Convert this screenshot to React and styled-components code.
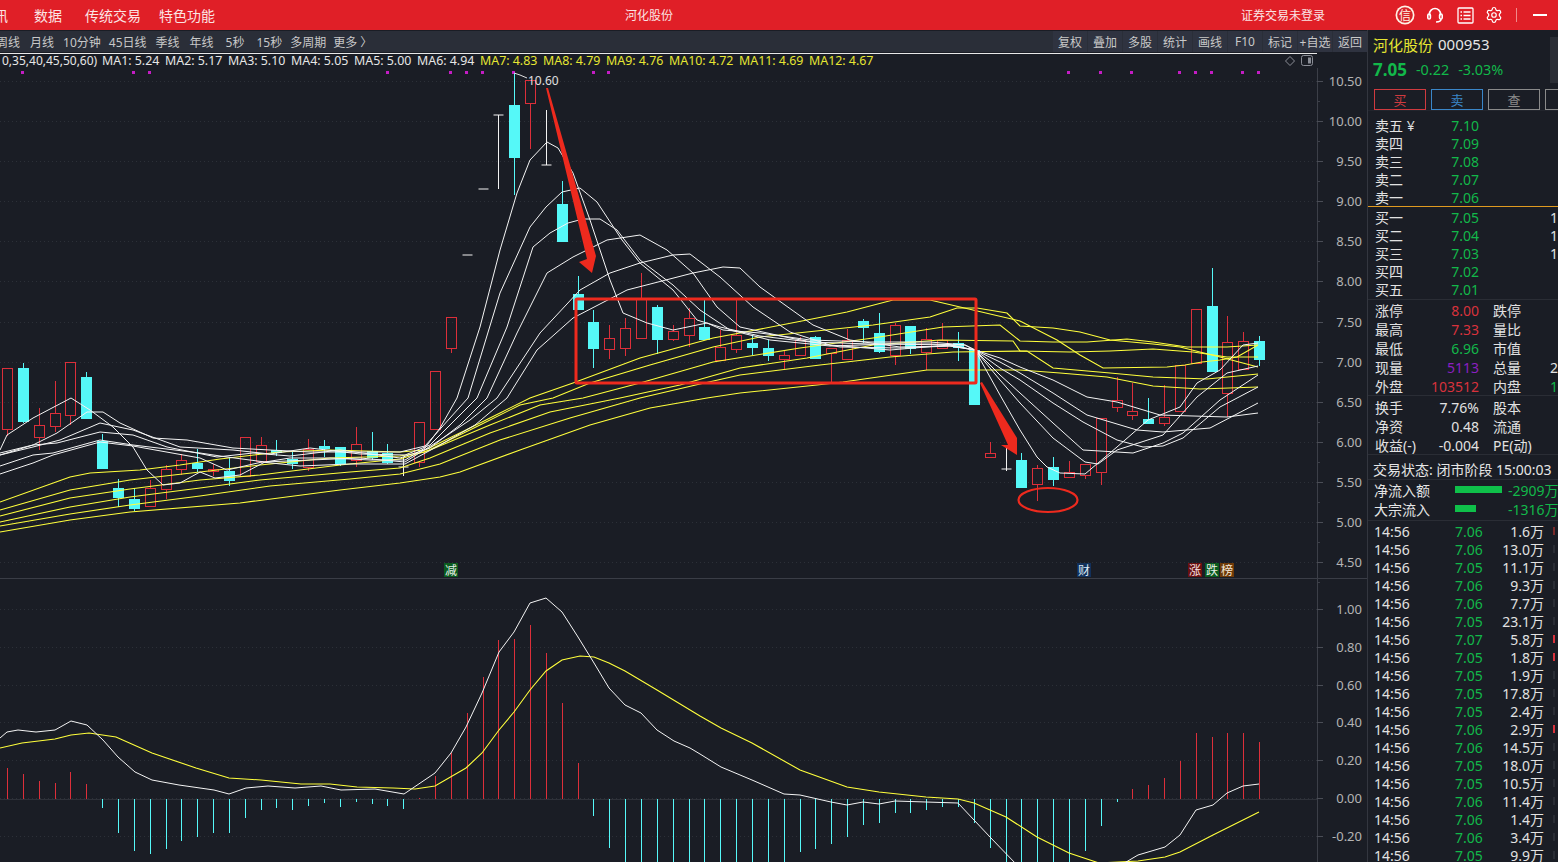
import React from 'react';
import styled, { createGlobalStyle } from 'styled-components';
import { Settings } from 'lucide-react';

const FONT = '"Noto Sans", "Noto Sans CJK SC", sans-serif';
const CYAN = '#55f8f8';
const RED = '#dc2f3a';
const LINE_RED = '#ee2a1e';
const YELLOW = '#ffff3c';

const GlobalStyle = createGlobalStyle`
  html, body { margin: 0; padding: 0; background: #1a1d25; overflow: hidden; }
  * { box-sizing: border-box; }
`;

const Page = styled.div`
  width: 1558px;
  height: 862px;
  overflow: hidden;
  display: flex;
  flex-direction: column;
  font-family: ${FONT};
  color: #e6e6e6;
  background: #1a1d25;
`;

/* top red bar */
const TopBar = styled.div`
  height: 30px;
  flex: none;
  background: #e01f27;
  display: flex;
  align-items: center;
  color: #fbe4e4;
  white-space: nowrap;
`;
const NavItem = styled.span`
  font-size: 14px;
  margin-left: ${p => p.$ml}px;
`;
const BarText = styled.span`
  font-size: 12px;
  margin-left: ${p => p.$ml}px;
`;
const BarIcon = styled.span`
  display: flex;
  width: 20px;
  height: 20px;
  align-items: center;
  justify-content: center;
  margin-left: ${p => p.$ml}px;
`;
const BarDivider = styled.span`
  width: 1px;
  height: 14px;
  background: #f08a8a;
  margin-left: 12px;
`;

const Body = styled.div`
  flex: 1;
  display: flex;
  min-height: 0;
`;
const ChartColumn = styled.div`
  width: 1367px;
  flex: none;
  display: flex;
  flex-direction: column;
`;

/* period toolbar */
const ToolBar = styled.div`
  height: 21px;
  margin-top: 1px;
  flex: none;
  background: #2a2e38;
  display: flex;
  align-items: center;
  justify-content: space-between;
`;
const Periods = styled.div`
  display: flex;
  align-items: center;
  font-size: 12px;
  color: #c8c8c8;
  white-space: nowrap;
`;
const Period = styled.span`
  margin-left: ${p => p.$ml}px;
`;
const Tools = styled.div`
  display: flex;
  height: 100%;
  gap: 1px;
`;
const Tool = styled.span`
  width: 34px;
  display: flex;
  align-items: center;
  justify-content: center;
  font-size: 12px;
  color: #c8c8c8;
  white-space: nowrap;
  background: #2f3340;
`;

const Legend = styled.div`
  width: 1317px;
  height: 15px;
  flex: none;
  margin-top: 1px;
  border-top: 1px solid #e8e8e8;
  display: flex;
  align-items: center;
  gap: 5px;
  padding: 0 4px 1px 2px;
  font-size: 12.4px;
  white-space: nowrap;
`;
const LegendItem = styled.span`
  color: ${p => (p.$hot ? '#e6e632' : '#e6e6e6')};
  width: ${p => p.$w}px;
  flex: none;
`;
const LegendParams = styled(LegendItem)`
  font-size: 12px;
`;
const LegendTools = styled.span`
  margin-left: auto;
  display: flex;
  align-items: center;
  gap: 6px;
`;

const ChartSvg = styled.svg`
  display: block;
  width: 1367px;
  height: 794px;
  flex: none;
`;

/* right side panel */
const Side = styled.div`
  flex: 1;
  min-width: 0;
  overflow: hidden;
  border-left: 1px solid #33363f;
  font-size: 14px;
  white-space: nowrap;
`;
const HeadRow = styled.div`
  height: 28px;
  padding-left: 5px;
  display: flex;
  align-items: center;
  gap: 5px;
  font-size: 15px;
  position: relative;
`;
const StockName = styled.span`
  color: #e6e632;
`;
const Thumb = styled.span`
  position: absolute;
  right: 0;
  top: 7px;
  width: 8px;
  height: 46px;
  background: #2a2d35;
`;
const PriceRow = styled.div`
  height: 22px;
  padding-left: 5px;
  display: flex;
  align-items: center;
  color: #12b84a;
  font-size: 14.4px;
`;
const BigPrice = styled.b`
  font-size: 17px;
  margin-right: 9px;
`;
const Change = styled.span`
  margin-right: 9px;
`;
const TradeRow = styled.div`
  display: flex;
  gap: 5px;
  padding: 9px 0 1px 6px;
  height: 31px;
  border-bottom: 1px solid #22252d;
`;
const TradeBtn = styled.span`
  width: 52px;
  flex: none;
  height: 21px;
  border: 1px solid ${p => p.$c};
  color: ${p => p.$c};
  display: flex;
  align-items: center;
  justify-content: center;
  font-size: 13px;
`;
const Section = styled.div`
  padding-top: ${p => p.$pt || 0}px;
  padding-bottom: ${p => p.$pb || 0}px;
  border-bottom: ${p => (p.$line ? `1px solid ${p.$line}` : 'none')};
`;
const Row = styled.div`
  height: ${p => p.$h}px;
  padding-left: 7px;
  display: grid;
  grid-template-columns: 36px 68px 14px 57px 40px;
  align-items: center;
  color: #e2e2e2;
  overflow: hidden;
`;
const Value = styled.span`
  text-align: right;
  color: ${p => p.$c || '#e2e2e2'};
`;
const Label2 = styled.span`
  grid-column: 4;
`;
const Clipped = styled.span`
  grid-column: 5;
  color: ${p => p.$c || '#e2e2e2'};
`;
const StatusRow = styled.div`
  height: 21px;
  padding-left: 5px;
  display: flex;
  align-items: center;
  font-size: 14px;
  gap: 4px;
`;
const FlowRow = styled.div`
  height: 19px;
  padding-left: 6px;
  display: flex;
  align-items: center;
  font-size: 14px;
`;
const FlowName = styled.span`
  width: 81px;
  flex: none;
`;
const FlowTrack = styled.span`
  width: 53px;
  flex: none;
`;
const FlowBar = styled.span`
  display: block;
  height: 7px;
  background: #0fc04a;
`;
const FlowValue = styled.span`
  color: #12b84a;
`;
const TickRow = styled.div`
  height: 18px;
  padding-left: 6px;
  display: grid;
  grid-template-columns: 81px 28px 61px 9px 4px;
  align-items: center;
  color: #e2e2e2;
`;
const TickPrice = styled.span`
  color: #12b84a;
`;
const TickVol = styled.span`
  text-align: right;
`;
const TickMark = styled.span`
  grid-column: 5;
  width: 2px;
  height: 8px;
  background: ${p => p.$c};
`;

/* candles: [high, bodyTop, bodyBottom, low, kind] in page pixels; r hollow red, c filled cyan, w white doji */
const candles = [
  [368,368,429,436,'r'],[363,368,421,423,'c'],[408,425,437,450,'r'],[381,413,426,432,'r'],[362,362,415,425,'r'],[372,377,418,418,'c'],
  [434,441,468,468,'c'],[479,488,497,507,'c'],[488,499,508,511,'c'],[480,488,506,506,'r'],[465,469,489,499,'r'],[454,460,469,475,'r'],
  [449,463,468,472,'c'],[464,469,471,476,'r'],[457,471,480,486,'c'],[437,437,476,476,'r'],[437,445,461,463,'r'],[440,450,452,456,'c'],
  [452,459,463,469,'c'],[439,449,467,471,'r'],[440,446,448,457,'c'],[447,447,463,466,'c'],[427,444,460,467,'r'],[432,451,457,460,'c'],
  [444,453,462,464,'c'],[457,467,467,476,'w'],[422,422,462,467,'r'],[371,371,429,429,'r'],[317,317,348,353,'r'],[255,255,255,255,'w'],
  [189,189,189,189,'w'],[115,115,115,189,'w'],[73,105,157,195,'c'],[80,80,103,149,'r'],[110,165,165,165,'w'],[181,204,241,241,'c'],
  [276,294,309,309,'c'],[310,322,348,368,'c'],[325,338,349,359,'r'],[318,328,348,356,'r'],[273,298,338,338,'r'],[305,307,339,354,'c'],
  [325,331,339,341,'r'],[308,318,335,347,'r'],[300,327,339,339,'c'],[330,347,360,360,'r'],[300,335,349,353,'r'],[335,343,347,355,'c'],
  [340,348,355,361,'c'],[350,355,359,369,'r'],[337,340,355,355,'r'],[336,337,358,359,'c'],[348,348,353,382,'r'],[329,340,359,360,'r'],
  [319,321,327,343,'c'],[313,333,351,353,'c'],[323,325,355,365,'r'],[326,326,348,354,'c'],[328,339,352,370,'r'],[323,340,348,348,'r'],
  [332,343,347,361,'c'],[350,350,404,404,'c'],[442,453,457,457,'r'],[448,469,469,471,'w'],[453,460,487,488,'c'],[465,468,484,501,'r'],
  [457,467,479,486,'c'],[461,472,477,477,'r'],[464,464,475,479,'r'],[418,418,472,485,'r'],[377,400,407,412,'r'],[383,411,415,420,'r'],
  [398,419,423,423,'c'],[385,417,423,426,'r'],[365,365,411,411,'r'],[309,309,363,363,'r'],[268,306,371,371,'c'],[316,342,393,417,'r'],
  [332,341,369,369,'r'],[336,341,359,366,'c'],
];
const candleX = i => Math.round(7 + 15.85 * i) + 0.5;

const whiteLines = [
  [[0,450],[7,435],[33,418],[71,398],[90,410],[113,427],[133,447],[147,470],[163,485],[180,483],[200,472],[215,478],[240,475],[265,462],[290,458],[330,458],[370,460],[405,460],[425,448],[440,428],[457,398],[480,327],[500,250],[517,193],[530,160],[547,142],[558,148],[573,173],[590,220],[610,280],[623,313],[647,323],[673,330],[707,323],[723,330],[760,333],[810,340],[870,342],[930,342],[965,345],[975,350],[1000,395],[1020,430],[1037,457],[1047,467],[1060,473],[1085,474],[1117,447],[1148,420],[1180,407],[1197,383],[1220,370],[1243,345],[1258,343]],
  [[0,453],[33,445],[57,433],[87,412],[103,412],[120,423],[153,438],[187,440],[233,448],[270,450],[310,452],[350,452],[400,452],[425,446],[450,418],[468,398],[500,293],[530,227],[546,207],[562,192],[580,188],[597,202],[622,240],[640,263],[673,290],[697,320],[720,327],[760,336],[810,342],[870,344],[930,344],[965,345],[975,350],[1000,380],[1020,403],[1053,438],[1085,462],[1098,464],[1117,450],[1163,435],[1197,397],[1227,373],[1258,366]],
  [[0,455],[33,447],[60,440],[100,423],[133,430],[180,447],[233,450],[270,454],[310,448],[360,454],[405,455],[430,445],[455,420],[477,398],[507,327],[533,247],[550,233],[568,223],[583,219],[600,219],[617,230],[640,260],[673,285],[700,310],[730,330],[770,340],[830,346],[890,344],[950,345],[975,350],[1000,375],[1020,393],[1053,423],[1083,450],[1117,452],[1133,453],[1163,443],[1183,433],[1220,400],[1258,375]],
  [[0,455],[33,445],[57,443],[100,432],[133,435],[167,447],[217,457],[253,453],[290,456],[340,450],[400,458],[430,448],[460,425],[487,398],[517,333],[547,273],[573,257],[607,240],[640,235],[667,250],[693,273],[717,307],[740,327],[790,338],[840,347],[900,348],[950,346],[975,350],[1000,368],[1020,380],[1053,403],[1083,422],[1117,440],[1143,447],[1163,446],[1183,438],[1220,407],[1258,387]],
  [[0,466],[33,455],[53,453],[100,440],[133,445],[200,453],[227,457],[265,462],[310,460],[360,458],[405,462],[440,440],[470,420],[497,398],[540,333],[580,290],[610,273],[640,263],[673,255],[690,254],[720,277],[753,307],[790,332],[830,345],[890,350],[950,345],[975,350],[1000,362],[1020,373],[1053,393],[1087,415],[1137,430],[1163,432],[1210,428],[1258,403]],
  [[0,474],[33,463],[53,455],[100,442],[133,446],[200,458],[227,470],[262,462],[300,466],[350,464],[405,464],[440,445],[475,425],[507,398],[537,350],[573,318],[627,290],[693,273],[723,267],[740,268],[760,287],[785,305],[813,325],[850,340],[900,347],[950,346],[975,350],[1000,358],[1020,367],[1053,380],[1087,397],[1117,402],[1160,415],[1227,417],[1258,413]],
];
const yellowLines = [
  [[0,502],[70,477],[90,473],[140,470],[180,465],[220,459],[280,452],[330,450],[400,452],[425,450],[470,428],[500,413],[530,398],[573,383],[640,358],[713,338],[740,333],[807,320],[847,312],[893,300],[930,300],[973,310],[1020,321],[1057,340],[1080,355],[1103,368],[1167,367],[1185,365],[1202,362],[1220,360],[1237,357],[1258,345]],
  [[0,510],[70,490],[130,480],[200,472],[260,465],[330,458],[400,456],[425,452],[480,425],[520,405],[553,398],[590,383],[650,365],[713,347],[760,337],[873,325],[930,317],[957,308],[977,308],[1007,313],[1020,326],[1053,328],[1080,332],[1110,340],[1153,344],[1180,347],[1220,357],[1258,367]],
  [[0,516],[70,498],[130,489],[200,480],[260,475],[340,465],[400,459],[430,450],[490,425],[540,405],[583,398],[640,383],[713,362],[800,348],[873,338],[943,327],[1000,325],[1020,341],[1053,342],[1087,342],[1127,339],[1153,342],[1187,347],[1227,347],[1258,345]],
  [[0,522],[70,507],[130,497],[200,488],[260,480],[350,472],[400,468],[430,458],[490,433],[550,412],[620,398],[680,385],[740,368],[807,358],[873,345],[940,340],[1013,341],[1020,351],[1070,352],[1110,351],[1153,349],[1193,352],[1227,357],[1258,357]],
  [[0,526],[70,514],[130,505],[200,496],[270,486],[350,479],[400,474],[440,464],[500,440],[570,418],[640,398],[700,384],[740,375],[820,365],[890,357],[953,352],[1027,351],[1053,368],[1110,373],[1153,377],[1207,379],[1258,374]],
  [[0,532],[70,520],[130,512],[240,503],[340,490],[400,483],[440,477],[460,472],[520,450],[590,425],[650,408],[707,398],[740,393],[817,385],[843,382],[927,370],[1007,370],[1020,370],[1060,373],[1107,377],[1153,386],[1200,389],[1258,387]],
];

const macdDif = [[0,738],[7,732],[18,730],[36,732],[55,730],[71,721],[87,725],[103,740],[118,757],[135,772],[152,780],[179,785],[214,790],[229,794],[246,788],[268,786],[295,788],[321,786],[341,790],[375,789],[404,794],[435,773],[451,753],[466,727],[482,693],[499,652],[514,632],[530,603],[546,598],[562,612],[578,637],[594,663],[609,688],[625,705],[641,713],[657,730],[674,741],[690,748],[700,754],[721,767],[752,780],[784,794],[800,795],[831,802],[847,805],[863,802],[879,804],[895,801],[926,802],[958,803],[974,820],[990,837],[1017,865],[1121,865],[1138,855],[1165,847],[1180,835],[1196,810],[1213,805],[1227,793],[1243,786],[1259,784]];
const macdDea = [[0,748],[22,743],[55,739],[71,735],[89,733],[116,737],[152,753],[196,768],[229,778],[261,780],[301,784],[330,784],[357,787],[393,788],[415,789],[435,786],[466,768],[482,753],[499,730],[514,712],[530,690],[546,671],[562,660],[580,656],[594,657],[609,663],[625,671],[657,690],[700,716],[721,728],[752,743],[800,770],[847,787],[879,792],[926,797],[958,799],[974,803],[1006,817],[1037,837],[1069,853],[1099,863],[1138,861],[1165,857],[1180,852],[1213,835],[1259,812]];
/* macd bars: end y per candle index, baseline 799 */
const macdBars = [768,774,781,783,772,784,808,833,851,854,849,841,837,833,833,818,810,808,810,806,803,807,802,804,806,809,798,776,753,713,677,640,639,625,653,703,763,816,848,880,880,880,880,880,880,880,880,880,880,880,852,849,844,837,825,823,813,813,810,807,807,823,848,880,880,880,880,880,851,826,802,789,785,778,761,733,737,733,733,742];

const priceTicks = [['10.50',81],['10.00',121],['9.50',161],['9.00',201],['8.50',241],['8.00',281],['7.50',322],['7.00',362],['6.50',402],['6.00',442],['5.50',482],['5.00',522],['4.50',562]];
const macdTicks = [['1.00',609],['0.80',647],['0.60',685],['0.40',722],['0.20',760],['0.00',798],['-0.20',836]];
const dots = [22,133,149,387,450,466,482,513,593,608,1068,1100,1131,1179,1195,1211,1242,1258];
const markers = [['减',451,'#0a5a1e','#e8f0e8'],['财',1084,'#12305a','#dfe8f5'],['涨',1195,'#6a1010','#f5e0e0'],['跌',1212,'#0a5a1e','#e8f0e8'],['榜',1227,'#6e3a08','#f5e8d8']];

const toPoints = pts => pts.map(p => p.join(',')).join(' ');

const Candle = ({ c, i }) => {
  const x = candleX(i);
  const [h, t, b, l, kind] = c;
  if (kind === 'w') {
    return (
      <g stroke="#f2f2f2" strokeWidth="1">
        <line x1={x} x2={x} y1={h} y2={l} />
        <line x1={x - 5} x2={x + 5} y1={t} y2={t} />
      </g>
    );
  }
  const color = kind === 'c' ? CYAN : RED;
  return (
    <g stroke={color} strokeWidth="1">
      <line x1={x} x2={x} y1={h} y2={t} />
      <line x1={x} x2={x} y1={b} y2={l} />
      <rect x={x - 5} y={t + 0.5} width="10" height={Math.max(b - t, 1)} fill={kind === 'c' ? CYAN : 'none'} />
    </g>
  );
};

const Chart = () => (
  <ChartSvg viewBox="0 68 1367 794">
    {[...priceTicks, ...macdTicks].map(([, y]) => (
      <line key={y} x1="0" x2="1317" y1={y + 0.5} y2={y + 0.5} stroke="#2c3038" strokeDasharray="1 3" />
    ))}
    <line x1="1317.5" x2="1317.5" y1="68" y2="862" stroke="#3c3f48" />
    <line x1="0" x2="1367" y1="578.5" y2="578.5" stroke="#3a3d46" />
    <line x1="0" x2="1317" y1="799.5" y2="799.5" stroke="#2e3139" />
    {[...priceTicks, ...macdTicks].map(([label, y]) => (
      <g key={label}>
        <line x1="1317" x2="1323" y1={y + 0.5} y2={y + 0.5} stroke="#4a4d56" />
        <text x="1362" y={y + 4.5} textAnchor="end" fontSize="13" fill="#b4b4b4">{label}</text>
      </g>
    ))}
    {priceTicks.map(([, y]) => (
      <line key={y} x1="1317" x2="1320" y1={y + 20.5} y2={y + 20.5} stroke="#3c3f48" />
    ))}
    {dots.map(x => <rect key={x} x={x - 1} y="71" width="3" height="3" fill="#c41cc4" />)}

    {candles.map((c, i) => <Candle key={i} c={c} i={i} />)}
    {yellowLines.map((pts, i) => <polyline key={i} points={toPoints(pts)} fill="none" stroke={YELLOW} strokeWidth="1.1" />)}
    {whiteLines.map((pts, i) => <polyline key={i} points={toPoints(pts)} fill="none" stroke="#f4f4f4" strokeWidth="1" />)}

    <polyline points="514,73 520,75 527,78" fill="none" stroke="#e0e0e0" />
    <text x="528" y="85" fontSize="12" fill="#e0e0e0">10.60</text>

    <rect x="576" y="299" width="400" height="84" rx="1" fill="none" stroke={LINE_RED} strokeWidth="3" />
    <polygon points="546,88 548,88 596,256 592,273 579,262 587,259" fill={LINE_RED} />
    <polygon points="980,383 982,382 1017,438 1017,455 1001,445 1008,445" fill={LINE_RED} />
    <ellipse cx="1048" cy="500" rx="29.5" ry="12" fill="none" stroke={LINE_RED} strokeWidth="2.2" />

    {markers.map(([t, x, bg, fg]) => (
      <g key={t}>
        <rect x={x - 7} y="563" width="14" height="14" fill={bg} />
        <text x={x} y="575" textAnchor="middle" fontSize="12" fill={fg}>{t}</text>
      </g>
    ))}

    {macdBars.map((y, i) => (
      <line key={i} x1={candleX(i)} x2={candleX(i)} y1="799" y2={y} stroke={y < 799 ? RED : CYAN} strokeWidth="1" />
    ))}
    <polyline points={toPoints(macdDea)} fill="none" stroke={YELLOW} strokeWidth="1.1" />
    <polyline points={toPoints(macdDif)} fill="none" stroke="#f4f4f4" strokeWidth="1" />
  </ChartSvg>
);

const legend = [['MA1: 5.24', 58], ['MA2: 5.17', 58], ['MA3: 5.10', 58], ['MA4: 5.05', 58], ['MA5: 5.00', 58], ['MA6: 4.94', 58]];
const hotLegend = [['MA7: 4.83', 58], ['MA8: 4.79', 58], ['MA9: 4.76', 58], ['MA10: 4.72', 65], ['MA11: 4.69', 65], ['MA12: 4.67', 65]];
const periods = [['周线', -4], ['月线', 10], ['10分钟', 9], ['45日线', 8], ['季线', 9], ['年线', 10], ['5秒', 12], ['15秒', 12], ['多周期', 8], ['更多 〉', 7]];
const tools = ['复权', '叠加', '多股', '统计', '画线', 'F10', '标记', '+自选', '返回'];

const GREEN = '#12b84a';
const sells = [['卖五', '7.10'], ['卖四', '7.09'], ['卖三', '7.08'], ['卖二', '7.07'], ['卖一', '7.06']];
const buys = [['买一', '7.05', '1'], ['买二', '7.04', '1'], ['买三', '7.03', '1.'], ['买四', '7.02'], ['买五', '7.01']];
const stats = [
  ['涨停', '8.00', '#d8323c', '跌停'],
  ['最高', '7.33', '#d8323c', '量比'],
  ['最低', '6.96', GREEN, '市值'],
  ['现量', '5113', '#8a1fc0', '总量', '2'],
  ['外盘', '103512', '#d8323c', '内盘', '1', GREEN],
];
const finance = [['换手', '7.76%', '股本'], ['净资', '0.48', '流通'], ['收益(-)', '-0.004', 'PE(动)']];
const ticks = [
  ['7.06', '1.6万', '#7a2a2a'], ['7.06', '13.0万', '#2a2d35'], ['7.05', '11.1万', '#2a2d35'], ['7.06', '9.3万', '#2a2d35'],
  ['7.06', '7.7万', '#2a2d35'], ['7.05', '23.1万', '#2a2d35'], ['7.07', '5.8万', '#d8323c'], ['7.05', '1.8万', '#d8323c'],
  ['7.05', '1.9万', '#2a2d35'], ['7.05', '17.8万', '#2a2d35'], ['7.05', '2.4万', '#2a2d35'], ['7.06', '2.9万', '#d8323c'],
  ['7.06', '14.5万', '#2a2d35'], ['7.05', '18.0万', '#2a2d35'], ['7.05', '10.5万', '#2a2d35'], ['7.06', '11.4万', '#2a2d35'],
  ['7.06', '1.4万', '#2a2d35'], ['7.06', '3.4万', '#2a2d35'], ['7.05', '9.9万', '#2a2d35'],
];

const SidePanel = () => (
  <Side>
    <HeadRow>
      <StockName>河化股份</StockName>
      <span>000953</span>
      <Thumb />
    </HeadRow>
    <PriceRow>
      <BigPrice>7.05</BigPrice>
      <Change>-0.22</Change>
      <Change>-3.03%</Change>
    </PriceRow>
    <TradeRow>
      <TradeBtn $c="#cf3a3f">买</TradeBtn>
      <TradeBtn $c="#3a86c8">卖</TradeBtn>
      <TradeBtn $c="#8a8a8a">查</TradeBtn>
      <TradeBtn $c="#8a8a8a" />
    </TradeRow>
    <Section $pt={4} $pb={1} $line="#e09a20">
      {sells.map(([name, price], i) => (
        <Row $h={18} key={name}>
          <span>{name}{i === 0 && ' ¥'}</span>
          <Value $c={GREEN}>{price}</Value>
        </Row>
      ))}
    </Section>
    <Section $pb={2} $line="#2a2d35">
      {buys.map(([name, price, vol]) => (
        <Row $h={18} key={name}>
          <span>{name}</span>
          <Value $c={GREEN}>{price}</Value>
          {vol && <Clipped>{vol}</Clipped>}
        </Row>
      ))}
    </Section>
    <Section $line="#2a2d35">
      {stats.map(([name, val, color, name2, extra, extraColor]) => (
        <Row $h={19} key={name}>
          <span>{name}</span>
          <Value $c={color}>{val}</Value>
          <Label2>{name2}</Label2>
          {extra && <Clipped $c={extraColor}>{extra}</Clipped>}
        </Row>
      ))}
    </Section>
    <Section $pt={1} $line="#2a2d35">
      {finance.map(([name, val, name2]) => (
        <Row $h={19} key={name}>
          <span>{name}</span>
          <Value>{val}</Value>
          <Label2>{name2}</Label2>
        </Row>
      ))}
    </Section>
    <Section $pt={3} $line="#2a2d35">
      <StatusRow>交易状态: 闭市阶段 15:00:03</StatusRow>
    </Section>
    <Section $pb={2} $line="#2a2d35">
      <FlowRow>
        <FlowName>净流入额</FlowName>
        <FlowTrack><FlowBar style={{ width: 47 }} /></FlowTrack>
        <FlowValue>-2909万</FlowValue>
      </FlowRow>
      <FlowRow>
        <FlowName>大宗流入</FlowName>
        <FlowTrack><FlowBar style={{ width: 21 }} /></FlowTrack>
        <FlowValue>-1316万</FlowValue>
      </FlowRow>
    </Section>
    {ticks.map(([price, vol, mark], i) => (
      <TickRow key={i}>
        <span>14:56</span>
        <TickPrice>{price}</TickPrice>
        <TickVol>{vol}</TickVol>
        <TickMark $c={mark} />
      </TickRow>
    ))}
  </Side>
);

const App = () => (
  <Page>
    <GlobalStyle />
    <TopBar>
      <NavItem $ml={-6}>讯</NavItem>
      <NavItem $ml={26}>数据</NavItem>
      <NavItem $ml={23}>传统交易</NavItem>
      <NavItem $ml={18}>特色功能</NavItem>
      <BarText $ml={410}>河化股份</BarText>
      <BarText $ml={568}>证券交易未登录</BarText>
      <BarIcon $ml={70}>
        <svg width="20" height="20" viewBox="0 0 20 20">
          <circle cx="10" cy="10" r="9.5" fill="#fff3e6" />
          <circle cx="10" cy="10" r="7.8" fill="#d8232a" />
          <text x="10" y="14.5" textAnchor="middle" fontSize="12" fill="#fff3e6">信</text>
        </svg>
      </BarIcon>
      <BarIcon $ml={10}>
        <svg width="18" height="18" viewBox="0 0 18 18" fill="none" stroke="#fff" strokeWidth="1.6">
          <path d="M3.5 9.5V8a5.5 5.5 0 0 1 11 0v1.5" />
          <rect x="1.8" y="8" width="2.6" height="5" rx="1.3" />
          <rect x="13.6" y="8" width="2.6" height="5" rx="1.3" />
          <path d="M15 13c0 2-2 3-5 3" />
        </svg>
      </BarIcon>
      <BarIcon $ml={10}>
        <svg width="17" height="17" viewBox="0 0 17 17" fill="none" stroke="#fff" strokeWidth="1.3">
          <rect x="1" y="1" width="15" height="15" rx="1" />
          <path d="M3.5 5h1.5M6.5 5h7M3.5 8.5h1.5M6.5 8.5h7M3.5 12h1.5M6.5 12h7" />
        </svg>
      </BarIcon>
      <BarIcon $ml={9}><Settings size={18} color="#fff" strokeWidth={1.6} /></BarIcon>
      <BarDivider />
      <BarIcon $ml={13}>
        <svg width="14" height="14" viewBox="0 0 14 14"><rect x="0" y="6" width="14" height="2" fill="#fff" /></svg>
      </BarIcon>
    </TopBar>
    <Body>
      <ChartColumn>
        <ToolBar>
          <Periods>
            {periods.map(([p, ml]) => <Period key={p} $ml={ml}>{p}</Period>)}
          </Periods>
          <Tools>
            {tools.map(t => <Tool key={t}>{t}</Tool>)}
          </Tools>
        </ToolBar>
        <Legend>
          <LegendParams $w={95}>0,35,40,45,50,60)</LegendParams>
          {legend.map(([t, w]) => <LegendItem key={t} $w={w}>{t}</LegendItem>)}
          {hotLegend.map(([t, w]) => <LegendItem key={t} $hot $w={w}>{t}</LegendItem>)}
          <LegendTools>
            <svg width="10" height="10" viewBox="0 0 10 10" fill="none" stroke="#8a8d96">
              <path d="M5 .5 9.5 5 5 9.5.5 5Z" />
            </svg>
            <svg width="12" height="11" viewBox="0 0 12 11" fill="none" stroke="#8a8d96">
              <rect x=".5" y=".5" width="11" height="10" rx="2" />
              <rect x="7" y="2.5" width="3" height="6" fill="#8a8d96" stroke="none" />
            </svg>
          </LegendTools>
        </Legend>
        <Chart />
      </ChartColumn>
      <SidePanel />
    </Body>
  </Page>
);

export default App;
